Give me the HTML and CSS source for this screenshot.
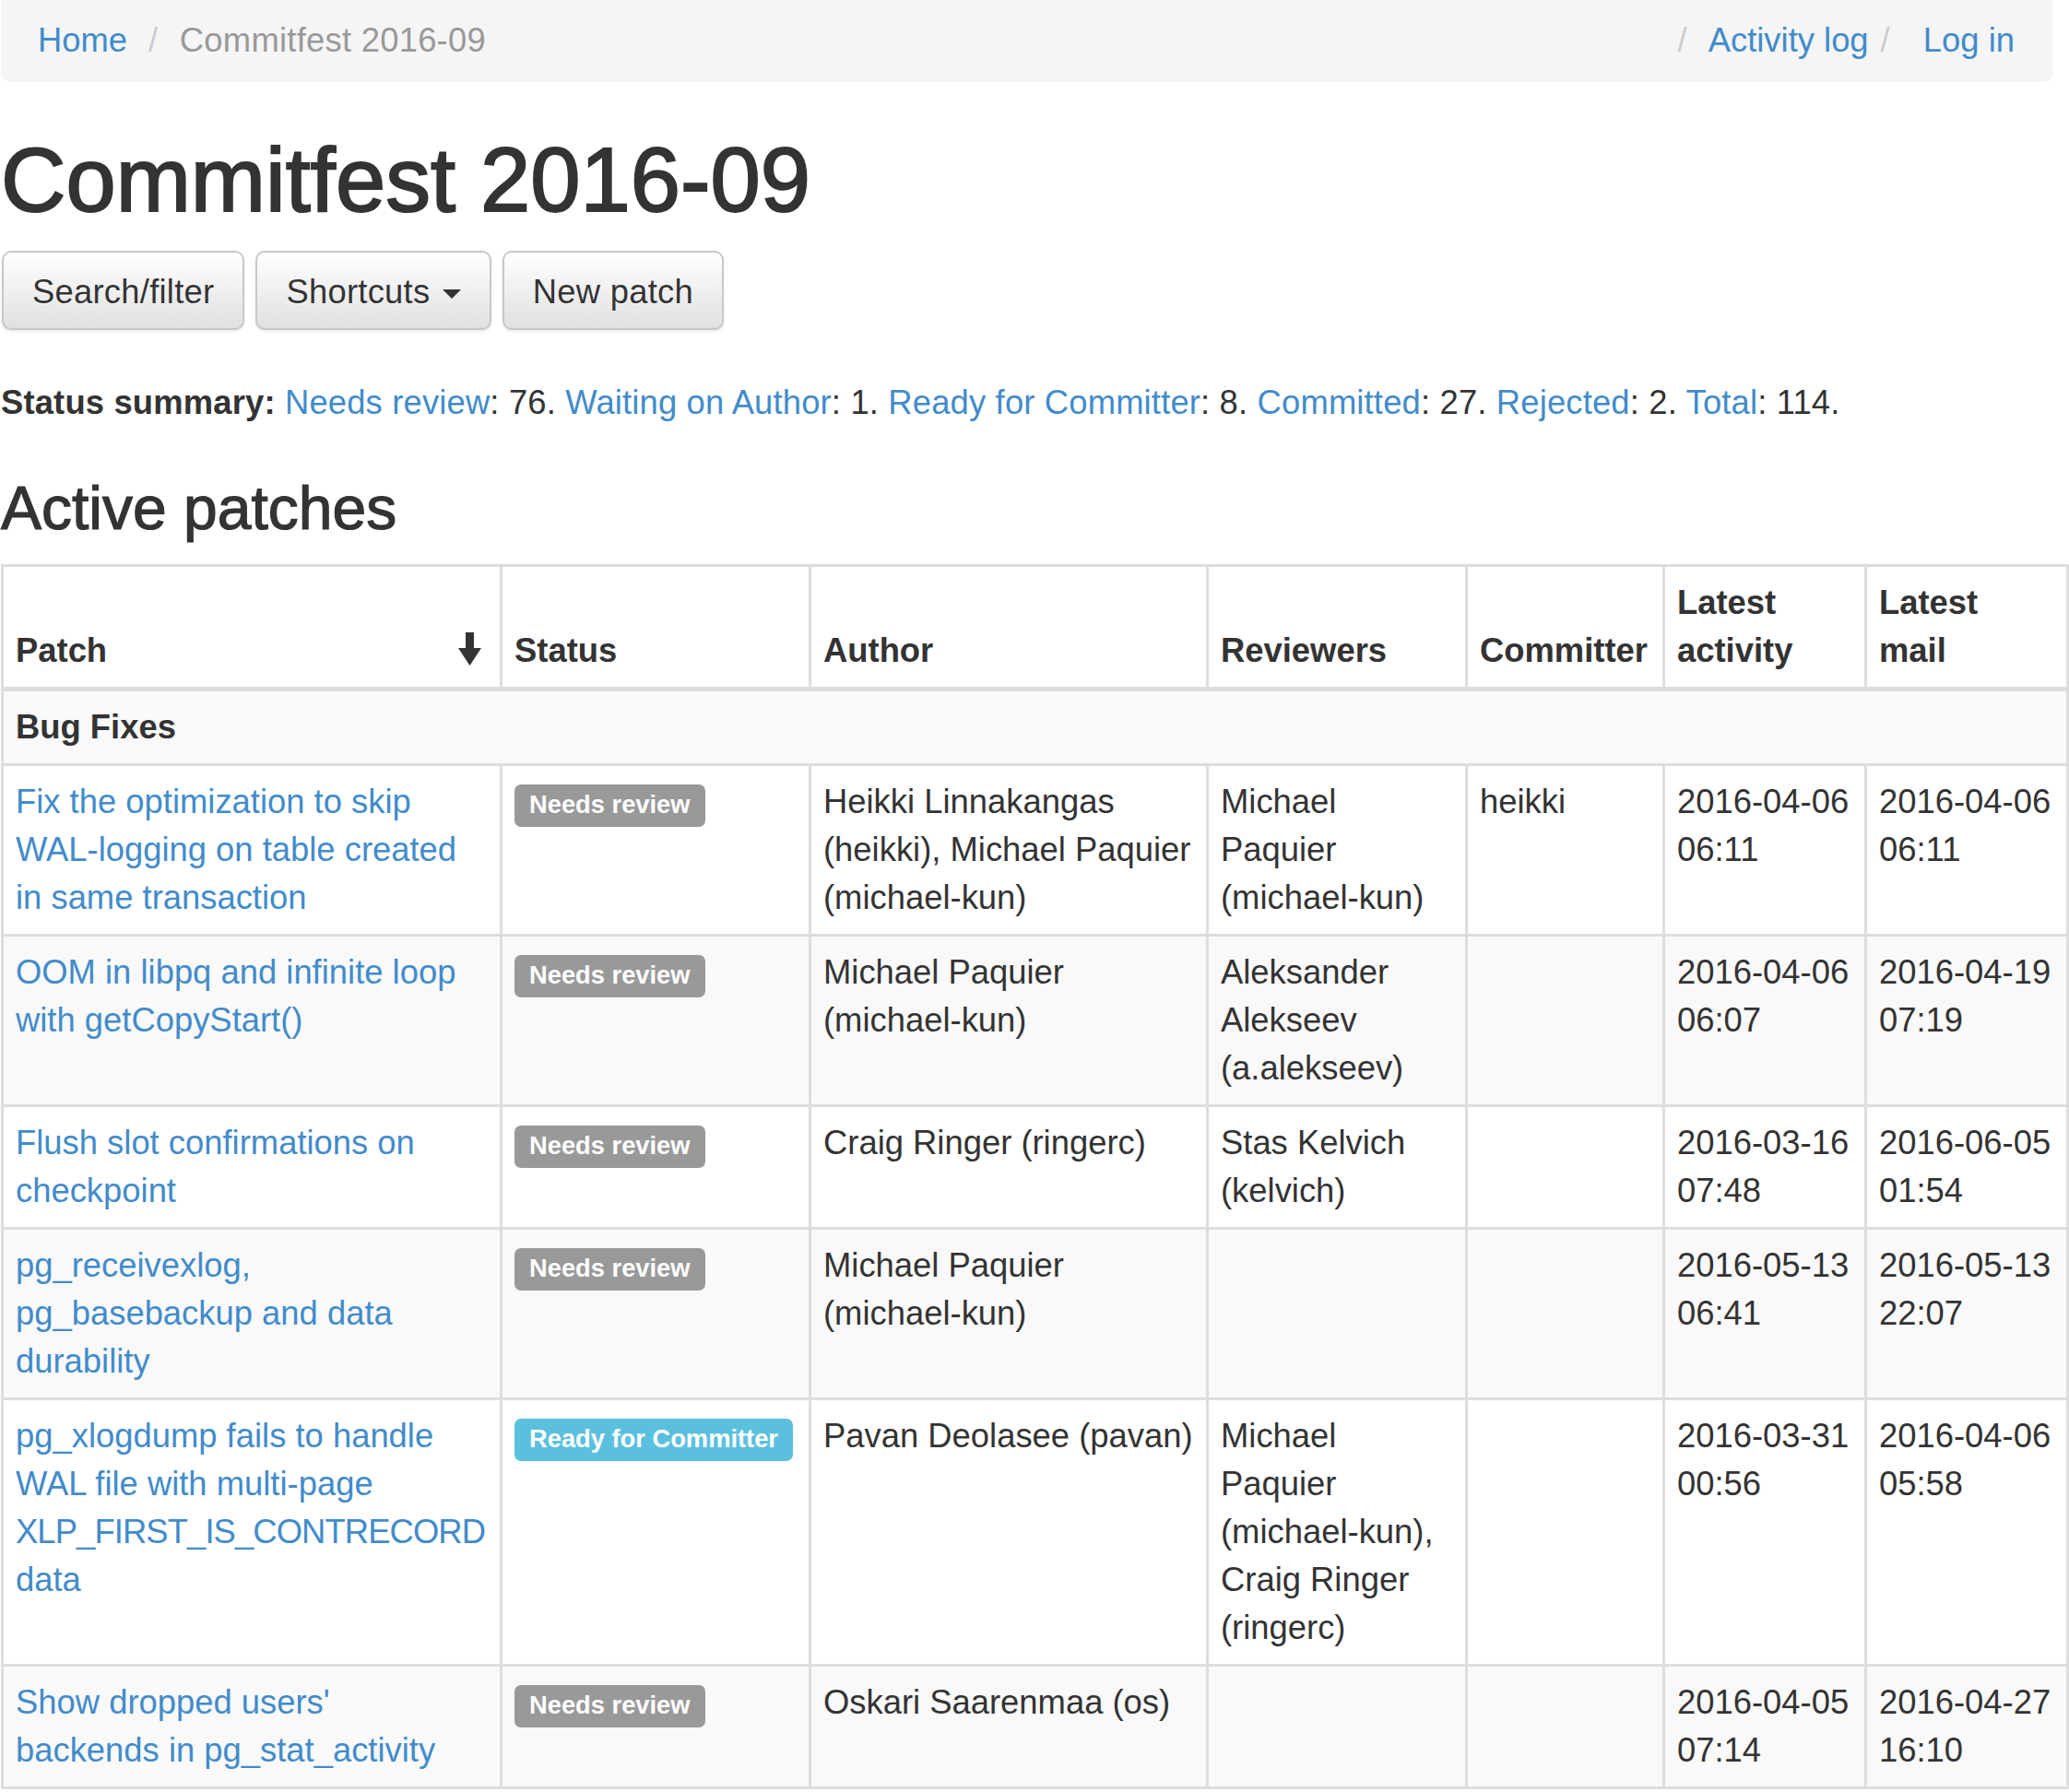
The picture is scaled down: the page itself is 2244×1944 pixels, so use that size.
FILE: index.html
```html
<!DOCTYPE html>
<html lang="en">
<head>
<meta charset="utf-8">
<title>Commitfest 2016-09</title>
<link rel="stylesheet" href="styles.css">
</head>
<body>
<div class="page">
  <ul class="breadcrumb">
    <li><a href="#">Home</a></li>
    <li class="active">Commitfest 2016-09</li>
    <li class="right-first"><a href="#">Activity log</a></li>
    <li class="login"><a href="#">Log in</a></li>
  </ul>

  <h1>Commitfest 2016-09</h1>

  <div class="actions">
    <button class="btn" type="button">Search/filter</button>
    <button class="btn" type="button">Shortcuts <span class="caret"></span></button>
    <a class="btn" href="#">New patch</a>
  </div>

  <p class="summary"><b>Status summary:</b> <a href="#">Needs review</a>: 76. <a href="#">Waiting on Author</a>: 1. <a href="#">Ready for Committer</a>: 8. <a href="#">Committed</a>: 27. <a href="#">Rejected</a>: 2. <a href="#">Total</a>: 114.</p>

  <h2>Active patches</h2>

  <table class="patches">
    <colgroup>
      <col class="c-patch">
      <col class="c-status">
      <col class="c-author">
      <col class="c-reviewers">
      <col class="c-committer">
      <col class="c-activity">
      <col class="c-mail">
    </colgroup>
    <thead>
      <tr>
        <th class="patch-col">
          <svg class="sort" width="25" height="36" viewBox="0 0 25 36" aria-hidden="true"><rect x="8" y="0" width="9" height="19" fill="#333"/><polygon points="0,17 25,17 12.5,36" fill="#333"/></svg>
          Patch
        </th>
        <th>Status</th>
        <th class="author-col">Author</th>
        <th>Reviewers</th>
        <th>Committer</th>
        <th>Latest activity</th>
        <th class="mail-head">Latest mail</th>
      </tr>
    </thead>
    <tbody>
      <tr>
        <th colspan="7" class="group">Bug Fixes</th>
      </tr>
      <tr>
        <td class="patch-col"><a href="#">Fix the optimization to skip WAL-logging on table created in same transaction</a></td>
        <td><span class="label label-default">Needs review</span></td>
        <td class="author-col">Heikki Linnakangas (heikki), Michael Paquier (michael-kun)</td>
        <td>Michael Paquier (michael-kun)</td>
        <td>heikki</td>
        <td><span class="date">2016-04-06</span> 06:11</td>
        <td><span class="date">2016-04-06</span> 06:11</td>
      </tr>
      <tr>
        <td class="patch-col"><a href="#">OOM in libpq and infinite loop with getCopyStart()</a></td>
        <td><span class="label label-default">Needs review</span></td>
        <td class="author-col">Michael Paquier (michael-kun)</td>
        <td>Aleksander Alekseev (a.alekseev)</td>
        <td></td>
        <td><span class="date">2016-04-06</span> 06:07</td>
        <td><span class="date">2016-04-19</span> 07:19</td>
      </tr>
      <tr>
        <td class="patch-col"><a href="#">Flush slot confirmations on checkpoint</a></td>
        <td><span class="label label-default">Needs review</span></td>
        <td class="author-col">Craig Ringer (ringerc)</td>
        <td>Stas Kelvich (kelvich)</td>
        <td></td>
        <td><span class="date">2016-03-16</span> 07:48</td>
        <td><span class="date">2016-06-05</span> 01:54</td>
      </tr>
      <tr>
        <td class="patch-col"><a href="#">pg_receivexlog, pg_basebackup and data durability</a></td>
        <td><span class="label label-default">Needs review</span></td>
        <td class="author-col">Michael Paquier (michael-kun)</td>
        <td></td>
        <td></td>
        <td><span class="date">2016-05-13</span> 06:41</td>
        <td><span class="date">2016-05-13</span> 22:07</td>
      </tr>
      <tr>
        <td class="patch-col"><a href="#">pg_xlogdump fails to handle WAL file with multi-page <span class="tight">XLP_FIRST_IS_CONTRECORD</span> data</a></td>
        <td><span class="label label-info">Ready for Committer</span></td>
        <td class="author-col">Pavan Deolasee (pavan)</td>
        <td>Michael Paquier (michael-kun), Craig Ringer (ringerc)</td>
        <td></td>
        <td><span class="date">2016-03-31</span> 00:56</td>
        <td><span class="date">2016-04-06</span> 05:58</td>
      </tr>
      <tr>
        <td class="patch-col"><a href="#">Show dropped users' backends in pg_stat_activity</a></td>
        <td><span class="label label-default">Needs review</span></td>
        <td class="author-col">Oskari Saarenmaa (os)</td>
        <td></td>
        <td></td>
        <td><span class="date">2016-04-05</span> 07:14</td>
        <td><span class="date">2016-04-27</span> 16:10</td>
      </tr>
    </tbody>
  </table>
</div>
</body>
</html>
```

FILE: styles.css
```css
html, body {
  margin: 0;
  padding: 0;
  background: #fff;
}

body {
  font-family: "Liberation Sans", Arial, Helvetica, sans-serif;
  font-size: 36.4px;
  line-height: 52px;
  color: #333;
  overflow: hidden;
}

a {
  color: #428bca;
  text-decoration: none;
}

.page {
  margin-left: 1px;
  width: 2226px;
}

/* Breadcrumb */
.breadcrumb {
  display: flex;
  list-style: none;
  margin: 0;
  padding: 18px 42px 19px 40px;
  background: #f5f5f5;
  border-radius: 0 0 10px 10px;
}

.breadcrumb li + li::before {
  content: "/\00a0";
  padding: 0 13px;
  color: #ccc;
}

.breadcrumb .active {
  color: #999;
  margin-left: 10px;
  letter-spacing: 0.25px;
}

.breadcrumb .right-first {
  margin-left: auto;
}

.breadcrumb .login::before {
  padding-right: 26px;
}

/* Heading */
h1 {
  font-size: 97.5px;
  line-height: 104px;
  font-weight: normal;
  -webkit-text-stroke: 2px #333;
  margin: 55px 0 24px;
}

h2 {
  font-size: 66px;
  line-height: 72px;
  font-weight: normal;
  -webkit-text-stroke: 1.2px #333;
  margin: 52px 0 25px;
}

/* Buttons */
.actions {
  display: flex;
  gap: 12px;
  padding-left: 1px;
}

.btn {
  display: inline-block;
  font-family: inherit;
  font-size: 36.4px;
  line-height: 52px;
  letter-spacing: 0.25px;
  color: #333;
  padding: 17px 31px 13px;
  border: 2px solid #c8c8c8;
  border-radius: 10px;
  background-color: #e8e8e8;
  background-image: linear-gradient(to bottom, #ffffff 0%, #e0e0e0 100%);
  text-shadow: 0 1px 0 #fff;
  box-shadow: inset 0 2px 0 rgba(255, 255, 255, 0.15), 0 2px 3px rgba(0, 0, 0, 0.08);
  cursor: pointer;
  white-space: nowrap;
}

.caret {
  display: inline-block;
  width: 0;
  height: 0;
  margin-left: 3px;
  vertical-align: middle;
  border-top: 10px solid #333;
  border-left: 10px solid transparent;
  border-right: 10px solid transparent;
}

/* Summary */
.summary {
  margin: 53px 0 0;
  letter-spacing: 0.16px;
}

.summary b {
  font-weight: bold;
}

/* Table */
.patches {
  border-collapse: collapse;
  table-layout: fixed;
  width: 2243px;
  border: 3px solid #ddd;
  margin: 0;
}

.c-patch { width: 541px; }
.c-status { width: 335px; }
.c-author { width: 431px; }
.c-reviewers { width: 281px; }
.c-committer { width: 214px; }
.c-activity { width: 219px; }
.c-mail { width: 219px; }

.patches th,
.patches td {
  border: 3px solid #ddd;
  padding: 13px;
  text-align: left;
  vertical-align: top;
}

.patches thead th {
  vertical-align: bottom;
  border-bottom-width: 5px;
  font-weight: bold;
}

.patches .patch-col {
  padding-right: 20px;
}

.patches .author-col {
  padding-right: 8px;
}

.patches .mail-head {
  padding-right: 20px;
}

.patches tbody tr:nth-child(odd) {
  background: #f9f9f9;
}

.patches .group {
  font-weight: bold;
}

.date {
  white-space: nowrap;
}

.sort {
  float: right;
  margin-top: 6px;
}

.tight {
  letter-spacing: -0.9px;
}

/* Labels */
.label {
  display: inline-block;
  font-size: 27.3px;
  font-weight: bold;
  line-height: 1;
  color: #fff;
  padding: 8px 16px 11px;
  border-radius: 7px;
  white-space: nowrap;
  vertical-align: baseline;
}

.label-default {
  background: #999;
}

.label-info {
  background: #5bc0de;
}
```
